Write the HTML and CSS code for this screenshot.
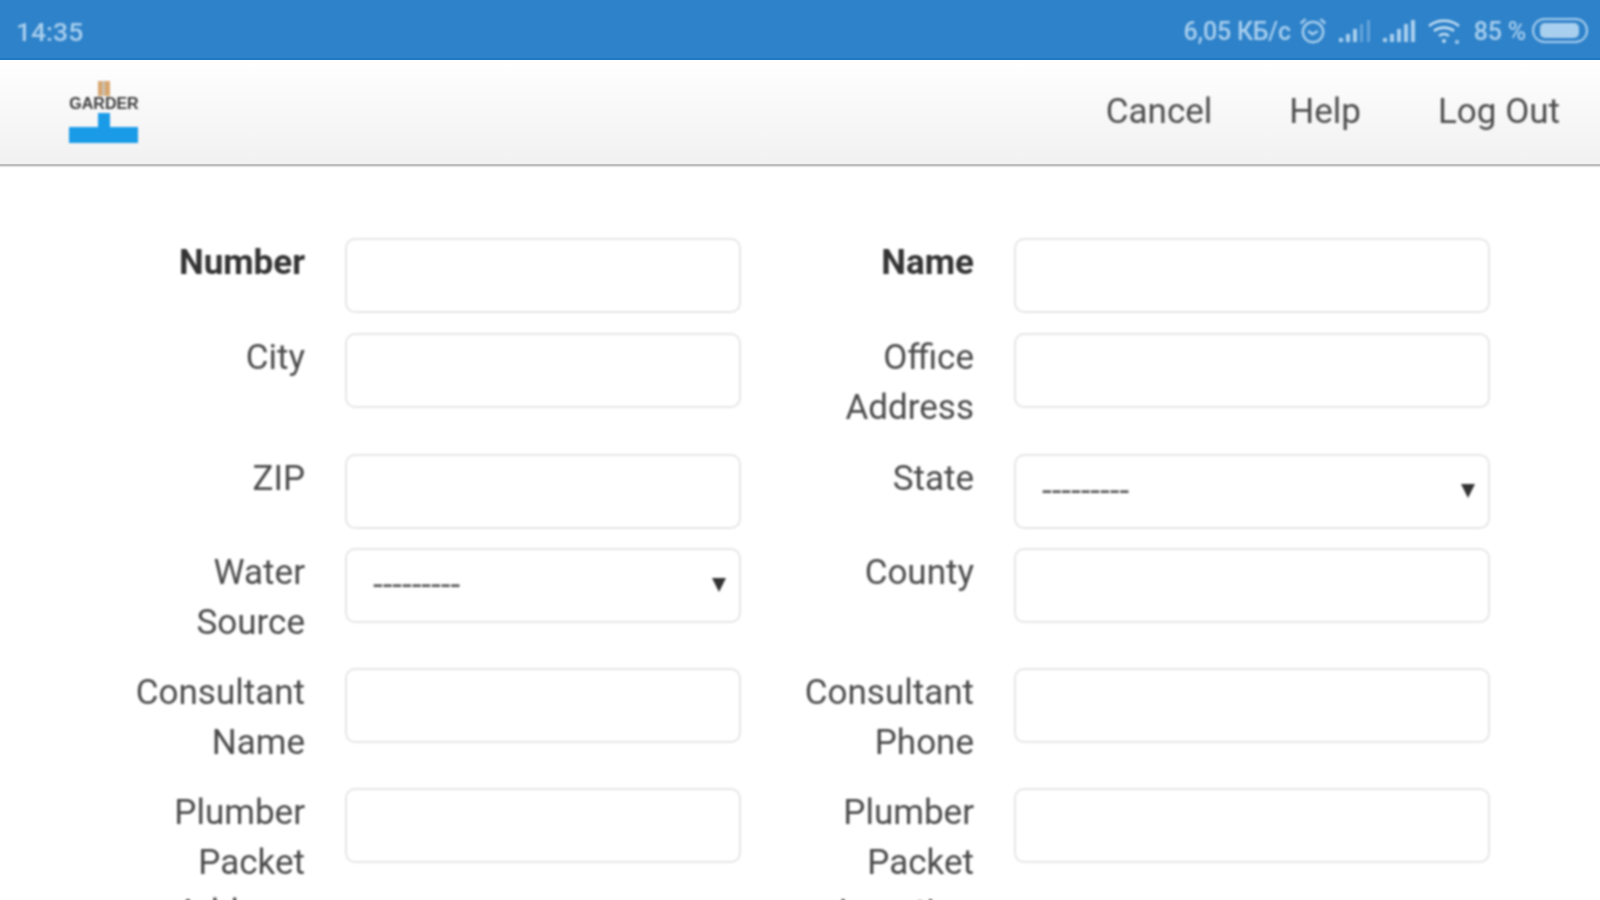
FILE: index.html
```html
<!DOCTYPE html>
<html lang="en">
<head>
<meta charset="utf-8">
<title>Garder</title>
<link rel="stylesheet" href="styles.css">
</head>
<body>
<div class="screen">
  <header class="status">
    <span class="time soft">14:35</span>
    <div class="status-right soft">
      <span class="speed">6,05 КБ/с</span>
      <svg class="ico alarm" width="30" height="30" viewBox="0 0 28 28" fill="none" stroke="#a9cfee" stroke-width="2.2"><circle cx="14" cy="15" r="9.5"/><path d="M9.500 14l4 3 5-3M2.500 7L7 3M25.500 7L21 3"/></svg>
      <svg class="ico sig1" width="34" height="24" viewBox="0 0 34 24"><g fill="#a9cfee"><rect x="1" y="19" width="4" height="4"/><rect x="8" y="15" width="4" height="8"/><rect x="15" y="10" width="4" height="13"/></g><g fill="#a9cfee" opacity=".45"><rect x="22" y="5" width="3" height="18"/><rect x="29" y="1" width="3" height="22"/></g></svg>
      <svg class="ico sig2" width="34" height="24" viewBox="0 0 34 24"><g fill="#a9cfee"><rect x="1" y="19" width="4" height="4"/><rect x="8" y="15" width="4" height="8"/><rect x="15" y="10" width="4" height="13"/><rect x="22" y="5" width="4" height="18"/><rect x="29" y="1" width="4" height="22"/></g></svg>
      <svg class="ico wifi" width="34" height="28" viewBox="0 0 34 28" fill="none" stroke="#c2def3" stroke-width="2.6"><path d="M2 9c8-7 22-7 30 0M7 14c5.500-4.500 14.500-4.500 20 0M12 19c3-2.400 7-2.400 10 0"/><circle cx="17" cy="24" r="2" fill="#c2def3" stroke="none"/><circle cx="30" cy="25" r="2" fill="#a9cfee" stroke="none"/></svg>
      <span class="pct">85 %</span>
      <div class="battery"><div class="battery-fill"></div></div>
    </div>
  </header>

  <nav class="nav">
    <svg class="logo soft" width="72" height="64" viewBox="0 0 72 64">
      <rect x="30" y="1" width="12" height="15" fill="#d9a66e"/>
      <rect x="34" y="1" width="3" height="15" fill="#c9bfb0"/>
      <rect x="30" y="33" width="12" height="15" fill="#1a9be8"/>
      <rect x="1" y="47" width="69" height="16" fill="#1a9be8"/>
      <text x="36" y="29" text-anchor="middle" class="logo-text">GARDER</text>
    </svg>
    <div class="nav-links soft">
      <a class="nav-link">Cancel</a>
      <a class="nav-link">Help</a>
      <a class="nav-link">Log Out</a>
    </div>
  </nav>

  <main class="form soft">
    <div class="row first">
      <label class="label strong">Number</label><div class="input"></div>
      <label class="label strong">Name</label><div class="input"></div>
    </div>
    <div class="row tall">
      <label class="label">City</label><div class="input"></div>
      <label class="label">Office<br>Address</label><div class="input"></div>
    </div>
    <div class="row">
      <label class="label">ZIP</label><div class="input"></div>
      <label class="label">State</label><div class="input select"><span class="select-value">---------</span><i class="arrow"></i></div>
    </div>
    <div class="row">
      <label class="label">Water<br>Source</label><div class="input select"><span class="select-value">---------</span><i class="arrow"></i></div>
      <label class="label">County</label><div class="input"></div>
    </div>
    <div class="row">
      <label class="label">Consultant<br>Name</label><div class="input"></div>
      <label class="label">Consultant<br>Phone</label><div class="input"></div>
    </div>
    <div class="row">
      <label class="label">Plumber<br>Packet<br>Address</label><div class="input"></div>
      <label class="label">Plumber<br>Packet<br>Location</label><div class="input"></div>
    </div>
  </main>
</div>
</body>
</html>
```
FILE: styles.css
```css
* { box-sizing: border-box; }
html, body { margin: 0; height: 100%; overflow: hidden; background: #fff; }
.screen {
  width: 1600px;
  height: 900px;
  overflow: hidden;
  font-family: Roboto, "Noto Sans", sans-serif;
  color: #444;
}
.soft { filter: blur(0.8px); }
.status {
  height: 60px;
  background: #2e82c9;
  border-bottom: 2px solid #1f78c4;
  display: flex;
  align-items: center;
  justify-content: space-between;
  padding: 4px 12px 0 16px;
  color: #a9cfee;
  font-size: 25px;
  font-weight: 500;
}
.time { font-size: 26.500px; }
.status-right { display: flex; align-items: center; margin-top: -1px; }
.speed { margin: 2px 7px 0 0; letter-spacing: -0.2px; }
.ico { display: block; }
.sig1 { margin-left: 10px; }
.sig2 { margin-left: 10px; }
.wifi { margin-left: 11px; }
.pct { margin: 2px 0 0 13px; letter-spacing: -0.2px; }
.battery {
  width: 56px;
  height: 25px;
  margin-left: 6px;
  border: 2px solid #a9cfee;
  border-radius: 13px;
  padding: 3px 7px 3px 6px;
}
.battery-fill { height: 100%; background: #a9cfee; border-radius: 5px; }
.nav {
  height: 106px;
  background: linear-gradient(#ffffff, #f1f1f1);
  border-bottom: 2px solid #bdbdbd;
  box-shadow: 0 1px 1px rgba(0, 0, 0, 0.12);
  display: flex;
  align-items: center;
  justify-content: space-between;
  padding: 0 40px 0 68px;
}
.logo { display: block; }
.logo-text { font: 700 16px "Liberation Sans", sans-serif; fill: #3a3a3a; }
.nav-links { display: flex; gap: 77px; }
.nav-link { font-size: 35px; line-height: 50px; color: #4d4d4d; }
.form { padding-top: 72px; }
.row {
  display: grid;
  grid-template-columns: 305px 396px 193px 476px;
  column-gap: 40px;
  height: 94px;
}
.row:has(br) { height: 120px; }
.row.first { height: 95px; }
.row.tall { height: 121px; }
.label {
  font-size: 35px;
  line-height: 50px;
  text-align: right;
  color: #4a4a4a;
  white-space: nowrap;
}
.strong { font-weight: 700; color: #333; }
.input {
  height: 74.500px;
  border: 2px solid #e6e6e6;
  border-radius: 10px;
  background: #fff;
}
.select {
  position: relative;
  display: flex;
  align-items: center;
  padding-left: 26px;
}
.select-value { font-size: 35px; line-height: 50px; color: #555; }
.arrow {
  position: absolute;
  right: 13px;
  top: 28px;
  border-left: 7px solid transparent;
  border-right: 7px solid transparent;
  border-top: 14px solid #333;
}
```
